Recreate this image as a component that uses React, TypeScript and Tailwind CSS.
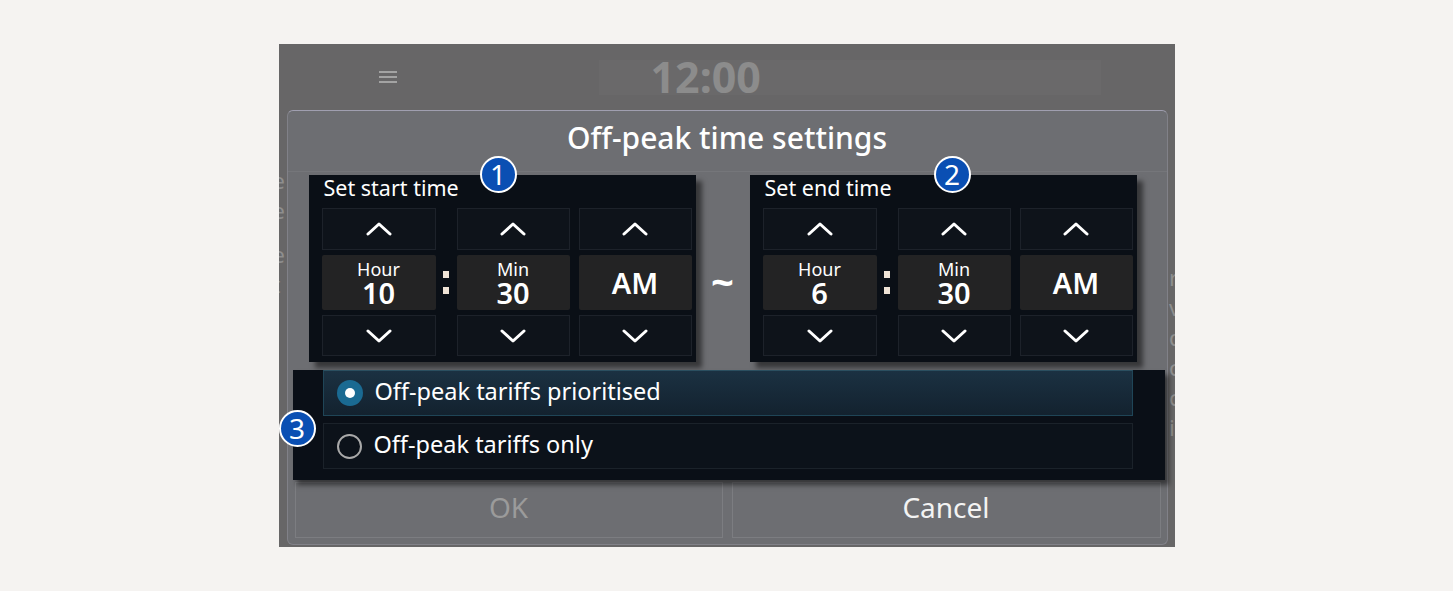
import React from 'react';

const font = { fontFamily: '"Noto Sans", "Open Sans", sans-serif' };

const Chevron = ({ up }: { up?: boolean }) => (
  <svg width="26" height="14" viewBox="0 0 26 14" fill="none">
    <path
      d={up ? 'M2 12 L13 2 L24 12' : 'M2 2 L13 12 L24 2'}
      stroke="white"
      strokeWidth="3"
      strokeLinecap="round"
      strokeLinejoin="round"
    />
  </svg>
);

const Badge = ({ n, className }: { n: string; className: string }) => (
  <div
    className={`absolute flex h-[37px] w-[37px] items-center justify-center rounded-full border-2 border-white bg-[#0a4fb3] text-[28px] leading-none text-white ${className}`}
  >
    <span className="-mt-[2px]">{n}</span>
  </div>
);

const ArrowCell = ({ up }: { up?: boolean }) => (
  <div className="flex items-center justify-center border border-[#1d222a] bg-[#0e131a]">
    <Chevron up={up} />
  </div>
);

const ValueCell = ({ label, value }: { label?: string; value: string }) => (
  <div className="flex flex-col items-center justify-center rounded-[2px] bg-[#232324] text-white">
    {label && <span className="text-[18px] leading-[20px]">{label}</span>}
    <span className="text-[29px] font-semibold leading-[28px]">{value}</span>
  </div>
);

const TimePanel = ({
  title,
  hour,
  badge,
}: {
  title: string;
  hour: string;
  badge: React.ReactNode;
}) => (
  <div className="relative h-[187px] w-[387px] bg-[#0a0f16] pl-[13px] shadow-[6px_6px_5px_rgba(0,0,0,0.5)]">
    {badge}
    <div className="h-[33px] pl-[2px] text-[21.5px] leading-[26px] text-white">{title}</div>
    <div className="grid grid-cols-[114px_21px_113px_9px_113px] grid-rows-[42px_55px_41px] gap-y-[5px]">
      <ArrowCell up />
      <div />
      <ArrowCell up />
      <div />
      <ArrowCell up />
      <ValueCell label="Hour" value={hour} />
      <div className="flex flex-col items-center justify-center gap-[9px]">
        <div className="h-[7px] w-[6px] bg-[#efe3d6]" />
        <div className="h-[7px] w-[6px] bg-[#efe3d6]" />
      </div>
      <ValueCell label="Min" value="30" />
      <div />
      <ValueCell value="AM" />
      <ArrowCell />
      <div />
      <ArrowCell />
      <div />
      <ArrowCell />
    </div>
  </div>
);

const Radio = ({ checked, text }: { checked?: boolean; text: string }) => (
  <div
    className={`flex h-[46px] items-center border pl-[13px] ${
      checked
        ? 'border-[#1f4557] border-t-[#2b4f60] bg-gradient-to-b from-[#1b3142] to-[#13222f]'
        : 'border-[#1b222a] bg-[#0c121a]'
    }`}
  >
    {checked ? (
      <div className="flex h-[26px] w-[26px] items-center justify-center rounded-full bg-[#1a6a92]">
        <div className="h-[10px] w-[10px] rounded-full bg-white" />
      </div>
    ) : (
      <div className="h-[25px] w-[25px] rounded-full border-2 border-[#a9a9a9]" />
    )}
    <span className="ml-[12px] pb-[2px] text-[23.5px] leading-none text-white">{text}</span>
  </div>
);

export default function App() {
  return (
    <div className="flex h-[591px] w-full items-center justify-center bg-[#f5f3f1]" style={font}>
      <div className="relative h-[503px] w-[896px] overflow-hidden bg-[#676667]">
        {/* background screen */}
        <div className="flex h-[66px] items-center">
          <div className="ml-[100px] flex w-[18px] flex-col gap-[3px]">
            <div className="h-[2px] bg-[#a3a3a3]" />
            <div className="h-[2px] bg-[#a3a3a3]" />
            <div className="h-[2px] bg-[#a3a3a3]" />
          </div>
          <div className="ml-[202px] flex h-[35px] w-[502px] items-center bg-[#6a696a] pl-[52px]">
            <span className="-mt-[2px] text-[43px] font-bold leading-none text-[#8c8c8c]">12:00</span>
          </div>
        </div>
        <div className="absolute left-[-6px] top-[128px] flex flex-col gap-[13px] text-[22px] leading-[17px] text-[#8e8e8e]">
          <span>e</span>
          <span>e</span>
          <span className="mt-[14px]">e</span>
          <span>t</span>
        </div>
        <div className="absolute right-[-8px] top-[225px] flex flex-col gap-[13px] text-[22px] leading-[17px] text-[#8e8e8e]">
          <span>r</span>
          <span>v</span>
          <span>d</span>
          <span>c</span>
          <span>c</span>
          <span>i</span>
        </div>

        {/* dialog */}
        <div className="absolute left-[8px] top-[66px] flex h-[435px] w-[881px] flex-col rounded-[6px] border border-[#818188] border-t-[#a09fb0] bg-[#6d6e72]">
          <div className="flex h-[61px] items-center justify-center border-b border-[#75767a] pb-[6px]">
            <span className="text-[30px] font-medium leading-none text-white">Off-peak time settings</span>
          </div>
          <div className="ml-[21px] mt-[3px] flex items-start">
            <TimePanel title="Set start time" hour="10" badge={<Badge n="1" className="-top-[19px] left-[171px]" />} />
            <div className="flex h-[187px] w-[54px] items-center justify-center pt-[26px] text-[40px] font-bold leading-none text-white">
              ~
            </div>
            <TimePanel title="Set end time" hour="6" badge={<Badge n="2" className="-top-[19px] left-[184px]" />} />
          </div>
          <div className="relative ml-[5px] mt-[8px] h-[110px] w-[872px] bg-[#0a0f17] pl-[30px] pr-[32px] shadow-[4px_5px_5px_rgba(0,0,0,0.5)]">
            <Badge n="3" className="-left-[14px] top-[40px]" />
            <div className="flex flex-col gap-[7px]">
              <Radio checked text="Off-peak tariffs prioritised" />
              <Radio text="Off-peak tariffs only" />
            </div>
          </div>
          <div className="ml-[7px] mt-[2px] flex gap-[9px]">
            <div className="flex h-[56px] w-[428px] items-center justify-center border border-[#7c7d81] pb-[6px] text-[28px] text-[#9b9b9b]">
              OK
            </div>
            <div className="flex h-[56px] w-[429px] items-center justify-center border border-[#7c7d81] pb-[6px] text-[28px] text-[#f3f3f3]">
              Cancel
            </div>
          </div>
        </div>
      </div>
    </div>
  );
}
